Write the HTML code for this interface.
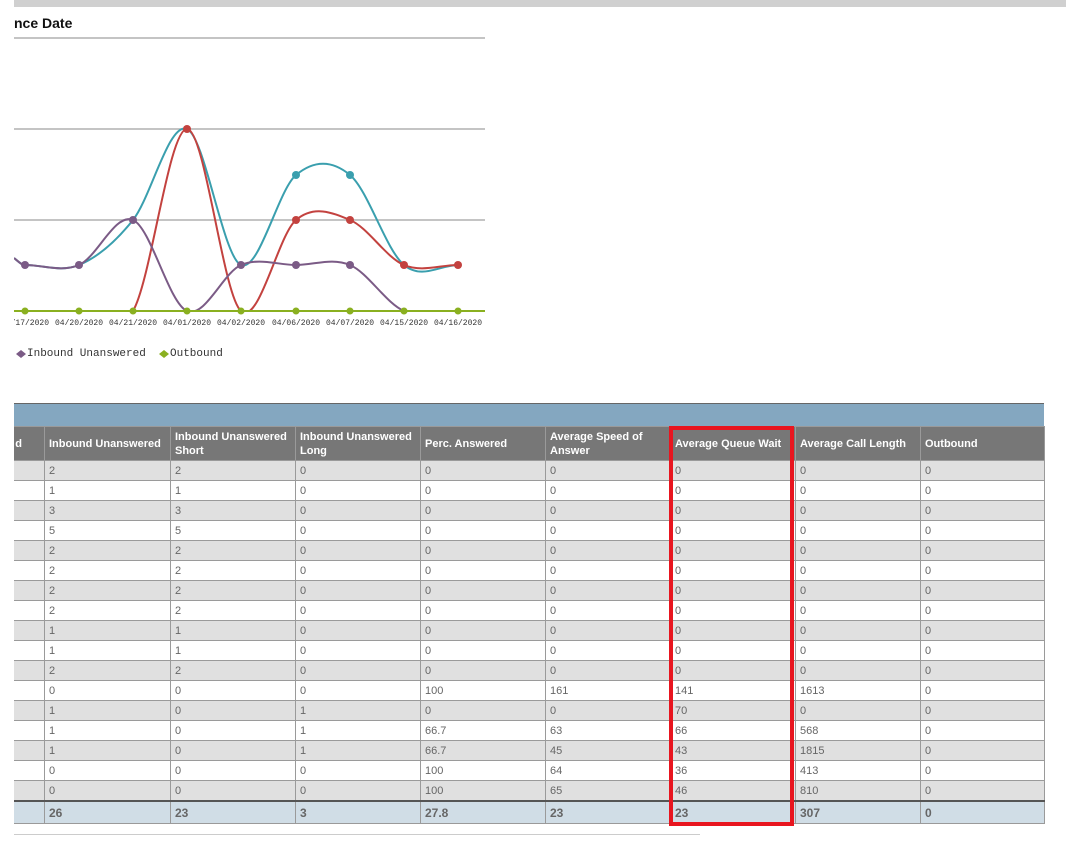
<!DOCTYPE html>
<html><head><meta charset="utf-8"><style>
body{margin:0;background:#fff;width:1066px;height:843px;overflow:hidden;position:relative;font-family:"Liberation Sans",Arial,sans-serif}
.top{position:absolute;left:14px;top:0;width:1052px;height:7px;background:#d0d0d0}
.title{position:absolute;left:14px;top:15px;font-size:14px;font-weight:bold;color:#111}
svg{position:absolute;left:0;top:0}
.blue{position:absolute;left:14px;top:403px;width:1030px;height:23px;background:#84a7c0;border-top:1px solid #666;box-sizing:border-box}
.wrap{position:absolute;left:14px;top:426px;width:1040px;height:400px;overflow:hidden}
table{position:absolute;left:-1px;top:0;border-collapse:collapse;font-size:11px;table-layout:fixed}
td,th{border:1px solid #9a9a9a;padding:0 4px;text-align:left;overflow:hidden;white-space:nowrap}
th{background:#777;color:#fff;font-weight:bold;height:33px;white-space:normal;line-height:14px;vertical-align:middle}
th:first-child{text-align:right;padding:0 22px 0 0}
td{height:19px;color:#666}
tr.g td{background:#e0e0e0}
tr.t td{background:#d0dde6;font-weight:bold;font-size:12px;height:21px;border-top:2px solid #555}
.red{position:absolute;left:669px;top:426px;width:125px;height:400px;border:4px solid #e8151f;box-sizing:border-box}
.bl{position:absolute;left:14px;top:834px;width:686px;height:1px;background:#ccc}
</style></head><body>
<div class="top"></div>
<div class="title">nce Date</div>
<svg width="500" height="370">
<defs><clipPath id="c"><rect x="14" y="30" width="472" height="282"/></clipPath></defs>
<g stroke="#b0b0b0" stroke-width="1.5"><line x1="14" y1="38" x2="485" y2="38"/><line x1="14" y1="129" x2="485" y2="129"/><line x1="14" y1="220" x2="485" y2="220"/><line x1="14" y1="311" x2="485" y2="311"/></g>
<g clip-path="url(#c)" fill="none" stroke-width="2">
<path stroke="#3a9fae" d="M14 258 C20 263 22 265 25 265 C43 265 61 272.5 79 265 C97 257.5 115 242.7 133 220 C151 197.3 169 121.5 187 129 C205 136.5 223 257.3 241 265 C259 272.7 278 190 296 175 C314 160 332 160 350 175 C368 190 386 250 404 265 C422 280 440 265 458 265"/>
<path stroke="#c3423f" d="M25 311 L133 311 C151 280.7 169 129 187 129 C205 129 223 295.8 241 311 C259 326.2 278 235.2 296 220 C314 204.8 332 212.5 350 220 C368 227.5 386 257.5 404 265 C422 272.5 440 265 458 265"/>
<path stroke="#7b5b86" d="M14 258 C20 263 22 265 25 265 C43 265 61 272.5 79 265 C97 257.5 115 212.3 133 220 C151 227.7 169 303.5 187 311 C205 318.5 223 272.7 241 265 C259 257.3 278 265 296 265 C314 265 332 257.3 350 265 C368 272.7 386 303.3 404 311 L458 311"/>
<line x1="14" y1="311" x2="485" y2="311" stroke="#8ab020" stroke-width="2"/>
</g>
<g fill="#3a9fae"><circle cx="296" cy="175" r="4"/><circle cx="350" cy="175" r="4"/></g>
<g fill="#c3423f"><circle cx="187" cy="129" r="4"/><circle cx="296" cy="220" r="4"/><circle cx="350" cy="220" r="4"/><circle cx="404" cy="265" r="4"/><circle cx="458" cy="265" r="4"/></g>
<g fill="#7b5b86"><circle cx="25" cy="265" r="4"/><circle cx="79" cy="265" r="4"/><circle cx="133" cy="220" r="4"/><circle cx="241" cy="265" r="4"/><circle cx="296" cy="265" r="4"/><circle cx="350" cy="265" r="4"/></g>
<g fill="#8ab020"><circle cx="25" cy="311" r="3.5"/><circle cx="79" cy="311" r="3.5"/><circle cx="133" cy="311" r="3.5"/><circle cx="187" cy="311" r="3.5"/><circle cx="241" cy="311" r="3.5"/><circle cx="296" cy="311" r="3.5"/><circle cx="350" cy="311" r="3.5"/><circle cx="404" cy="311" r="3.5"/><circle cx="458" cy="311" r="3.5"/></g>
<g font-family="Liberation Mono,monospace" font-size="8" fill="#333" text-anchor="middle">
<text x="25" y="325">04/17/2020</text><text x="79" y="325">04/20/2020</text><text x="133" y="325">04/21/2020</text><text x="187" y="325">04/01/2020</text><text x="241" y="325">04/02/2020</text><text x="296" y="325">04/06/2020</text><text x="350" y="325">04/07/2020</text><text x="404" y="325">04/15/2020</text><text x="458" y="325">04/16/2020</text></g>
<rect x="0" y="314" width="14" height="15" fill="#fff"/>
<g font-family="Liberation Mono,monospace" font-size="11" fill="#333">
<path d="M16 354 L21 350 L26 354 L21 358Z" fill="#7b5b86"/><text x="27" y="356">Inbound Unanswered</text>
<path d="M159 354 L164 350 L169 354 L164 358Z" fill="#8ab020"/><text x="170" y="356">Outbound</text></g>
</svg>
<div class="blue"></div>
<div class="wrap">
<table>
<colgroup><col style="width:31px"><col style="width:126px"><col style="width:125px"><col style="width:125px"><col style="width:125px"><col style="width:125px"><col style="width:125px"><col style="width:125px"><col style="width:124px"></colgroup>
<tr><th>d</th><th>Inbound Unanswered</th><th>Inbound Unanswered Short</th><th>Inbound Unanswered Long</th><th>Perc. Answered</th><th>Average Speed of Answer</th><th>Average Queue Wait</th><th>Average Call Length</th><th>Outbound</th></tr>
<tr class="g"><td></td><td>2</td><td>2</td><td>0</td><td>0</td><td>0</td><td>0</td><td>0</td><td>0</td></tr>
<tr><td></td><td>1</td><td>1</td><td>0</td><td>0</td><td>0</td><td>0</td><td>0</td><td>0</td></tr>
<tr class="g"><td></td><td>3</td><td>3</td><td>0</td><td>0</td><td>0</td><td>0</td><td>0</td><td>0</td></tr>
<tr><td></td><td>5</td><td>5</td><td>0</td><td>0</td><td>0</td><td>0</td><td>0</td><td>0</td></tr>
<tr class="g"><td></td><td>2</td><td>2</td><td>0</td><td>0</td><td>0</td><td>0</td><td>0</td><td>0</td></tr>
<tr><td></td><td>2</td><td>2</td><td>0</td><td>0</td><td>0</td><td>0</td><td>0</td><td>0</td></tr>
<tr class="g"><td></td><td>2</td><td>2</td><td>0</td><td>0</td><td>0</td><td>0</td><td>0</td><td>0</td></tr>
<tr><td></td><td>2</td><td>2</td><td>0</td><td>0</td><td>0</td><td>0</td><td>0</td><td>0</td></tr>
<tr class="g"><td></td><td>1</td><td>1</td><td>0</td><td>0</td><td>0</td><td>0</td><td>0</td><td>0</td></tr>
<tr><td></td><td>1</td><td>1</td><td>0</td><td>0</td><td>0</td><td>0</td><td>0</td><td>0</td></tr>
<tr class="g"><td></td><td>2</td><td>2</td><td>0</td><td>0</td><td>0</td><td>0</td><td>0</td><td>0</td></tr>
<tr><td></td><td>0</td><td>0</td><td>0</td><td>100</td><td>161</td><td>141</td><td>1613</td><td>0</td></tr>
<tr class="g"><td></td><td>1</td><td>0</td><td>1</td><td>0</td><td>0</td><td>70</td><td>0</td><td>0</td></tr>
<tr><td></td><td>1</td><td>0</td><td>1</td><td>66.7</td><td>63</td><td>66</td><td>568</td><td>0</td></tr>
<tr class="g"><td></td><td>1</td><td>0</td><td>1</td><td>66.7</td><td>45</td><td>43</td><td>1815</td><td>0</td></tr>
<tr><td></td><td>0</td><td>0</td><td>0</td><td>100</td><td>64</td><td>36</td><td>413</td><td>0</td></tr>
<tr class="g"><td></td><td>0</td><td>0</td><td>0</td><td>100</td><td>65</td><td>46</td><td>810</td><td>0</td></tr>
<tr class="t"><td></td><td>26</td><td>23</td><td>3</td><td>27.8</td><td>23</td><td>23</td><td>307</td><td>0</td></tr>
</table>
</div>
<div class="red"></div>
<div class="bl"></div>
</body></html>
